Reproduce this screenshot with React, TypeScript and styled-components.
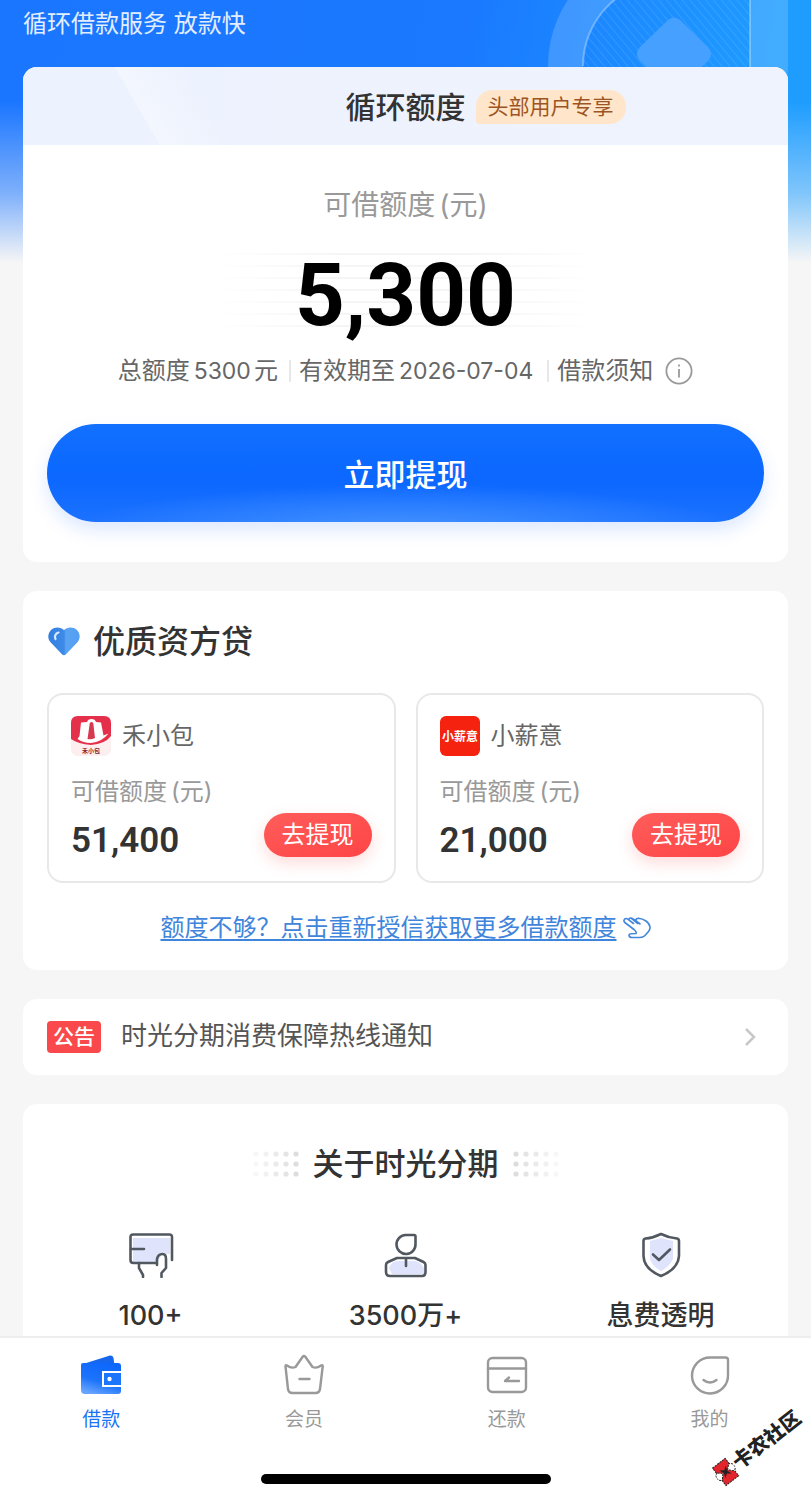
import React from 'react';
import styled, { createGlobalStyle, css } from 'styled-components';

const GlobalStyle = createGlobalStyle`
  *, *::before, *::after { box-sizing: border-box; }
  body {
    margin: 0;
    background: #f6f6f6;
    color: #333;
    font-family: Inter, "Noto Sans CJK SC", sans-serif;
  }
  button { font: inherit; border: 0; padding: 0; cursor: pointer; }
  a { text-decoration: none; color: inherit; }
  h1, h2, p, ul, dl { margin: 0; padding: 0; }
  svg { display: block; flex: none; }
`;

const Screen = styled.div`
  height: 100vh;
  display: flex;
  flex-direction: column;
  overflow: hidden;
`;

const Scroller = styled.main`
  position: relative;
  flex: 1;
  min-height: 0;
  overflow: hidden;
`;

const Hero = styled.div`
  position: absolute;
  inset: 0 0 auto 0;
  height: 268px;
  overflow: hidden;
  background:
    linear-gradient(180deg, rgba(246, 246, 246, 0) 38%, rgba(246, 246, 246, 0.45) 72%, #f6f6f6 98%),
    linear-gradient(100deg, #1b76ff 0%, #1a79ff 55%, #1e9dff 92%);
`;

const HeroArt = styled.svg`
  position: absolute;
  top: 0;
  right: 0;
`;

const Content = styled.div`
  position: relative;
  display: flex;
  flex-direction: column;
  gap: 29px;
  padding: 0 23px;
`;

const Slogan = styled.p`
  height: 38px;
  padding-top: 6px;
  font-size: 24px;
  line-height: 36px;
  color: #e2eeff;
`;

const Card = styled.section`
  background: #fff;
  border-radius: 14px;
  overflow: hidden;
`;

const QuotaHead = styled.header`
  height: 78px;
  padding-top: 2px;
  display: grid;
  grid-template-columns: 1fr auto 1fr;
  align-items: center;
  gap: 10px;
  background:
    linear-gradient(60deg, transparent 118px, rgba(255, 255, 255, 0.35) 119px, rgba(255, 255, 255, 0) 180px),
    linear-gradient(90deg, #ecf2fe, #eff3fd);
`;

const QuotaTitle = styled.h1`
  grid-column: 2;
  font-size: 30px;
  line-height: 40px;
  font-weight: 500;
`;

const Badge = styled.span`
  justify-self: start;
  padding: 0 12px;
  font-size: 21px;
  line-height: 34px;
  color: #9c5522;
  background: #ffe6cb;
  border-radius: 16px 16px 16px 4px;
`;

const QuotaBody = styled.div`
  display: flex;
  flex-direction: column;
  align-items: center;
  padding: 40px 24px;
`;

const Label = styled.p<{ $large?: boolean }>`
  color: #999;
  font-size: ${p => (p.$large ? 28 : 24)}px;
  line-height: ${p => (p.$large ? 40 : 32)}px;
`;

const Unit = styled.span`
  margin-left: 4px;
`;

const Amount = styled.strong<{ $large?: boolean }>`
  font-family: Roboto, sans-serif;
  ${p =>
    p.$large
      ? css`
          width: 380px;
          margin: 28px 0 18px;
          text-align: center;
          font-size: 87px;
          line-height: 84px;
          font-weight: 700;
          color: #000;
          background:
            linear-gradient(90deg, #fff, transparent 35%, transparent 65%, #fff),
            repeating-linear-gradient(180deg, #f5f5f5 0 2px, #fff 2px 12px);
        `
      : css`
          font-size: 35px;
          line-height: 44px;
          font-weight: 600;
        `}
`;

const Facts = styled.ul`
  display: flex;
  align-items: center;
  list-style: none;
  font-size: 24px;
  line-height: 32px;
  color: #666;
`;

const Fact = styled.li`
  display: flex;
  align-items: center;
  white-space: nowrap;
  & + & {
    margin-left: 11px;
    padding-left: 10px;
    background: linear-gradient(#e8e8e8, #e8e8e8) left center / 2px 22px no-repeat;
  }
`;

const Figure = styled.span`
  margin: 0 3px 0 4px;
  font-size: 23px;
`;

const InfoButton = styled.button`
  margin-left: 12px;
  background: none;
`;

const PrimaryButton = styled.button`
  width: 100%;
  height: 98px;
  margin-top: 37px;
  padding-bottom: 2px;
  border-radius: 49px;
  font-size: 31px;
  font-weight: 500;
  color: #fff;
  background:
    radial-gradient(ellipse 46% 44% at 50% 106%, rgba(80, 155, 255, 0.75), rgba(80, 155, 255, 0) 100%),
    linear-gradient(180deg, #1270ff 0%, #0b67ff 55%, #1c72ff 100%);
  box-shadow: 0 8px 18px rgba(20, 100, 255, 0.15);
`;

const PartnerCard = styled(Card)`
  display: flex;
  flex-direction: column;
  padding: 29px 24px 24px;
`;

const SectionTitle = styled.h2`
  display: flex;
  align-items: center;
  gap: 12px;
  font-size: 32px;
  line-height: 44px;
  font-weight: 500;
`;

const Partners = styled.div`
  display: grid;
  grid-template-columns: 1fr 1fr;
  gap: 20px;
  margin-top: 29px;
`;

const Partner = styled.article`
  display: flex;
  flex-direction: column;
  padding: 21px 22px 18px;
  border: 2px solid #e8e8e8;
  border-radius: 16px;
`;

const PartnerName = styled.div`
  display: flex;
  align-items: center;
  gap: 11px;
  margin-bottom: 20px;
  font-size: 24px;
  line-height: 40px;
  color: #666;
`;

const PartnerRow = styled.div`
  display: flex;
  align-items: flex-end;
  justify-content: space-between;
  margin-top: 5px;
`;

const RedButton = styled.button`
  width: 108px;
  height: 44px;
  margin-bottom: 6px;
  border-radius: 22px;
  font-size: 24px;
  line-height: 44px;
  color: #fff;
  background: linear-gradient(160deg, #ff5d5a, #fe4446);
  box-shadow: 0 6px 16px rgba(255, 75, 75, 0.2);
`;

const MoreLink = styled.a`
  align-self: center;
  display: flex;
  align-items: center;
  gap: 6px;
  margin-top: 27px;
  font-size: 24px;
  line-height: 36px;
  color: #3f85dc;
  span {
    text-decoration: underline;
    text-decoration-thickness: 2px;
    text-underline-offset: 3px;
  }
`;

const Notice = styled.a`
  display: flex;
  align-items: center;
  gap: 20px;
  height: 76px;
  padding: 0 32px 0 24px;
  background: #fff;
  border-radius: 14px;
  font-size: 26px;
  line-height: 36px;
  color: #555;
  svg { margin-left: auto; }
`;

const NoticeText = styled.span`
  padding-bottom: 2px;
`;

const NoticeTag = styled.span`
  padding: 0 6px;
  border-radius: 4px;
  font-size: 21px;
  line-height: 32px;
  font-weight: 500;
  color: #fff;
  background: #f9494c;
`;

const AboutTitle = styled(SectionTitle)`
  justify-content: center;
  gap: 14px;
  padding-top: 38px;
  font-size: 31px;
`;

const Features = styled.ul`
  display: grid;
  grid-template-columns: repeat(3, 1fr);
  margin-top: 46px;
  list-style: none;
`;

const Feature = styled.li`
  display: flex;
  flex-direction: column;
  align-items: center;
  gap: 18px;
  height: 140px;
  font-size: 27px;
  line-height: 40px;
  font-weight: 500;
`;

const BottomBar = styled.footer`
  position: relative;
  display: flex;
  flex-direction: column;
  align-items: center;
  justify-content: space-between;
  height: 164px;
  padding-bottom: 16px;
  border-top: 2px solid #eee;
  background: #fff;
`;

const Tabs = styled.nav`
  display: grid;
  grid-template-columns: repeat(4, 1fr);
  width: 100%;
  padding-top: 16px;
`;

const Tab = styled.a<{ $active?: boolean }>`
  display: flex;
  flex-direction: column;
  align-items: center;
  gap: 10px;
  font-size: 19px;
  line-height: 28px;
  color: ${p => (p.$active ? '#1a73f5' : '#999')};
`;

const HomeIndicator = styled.div`
  width: 290px;
  height: 10px;
  border-radius: 5px;
  background: #000;
`;

const Watermark = styled.div`
  position: absolute;
  right: 2px;
  bottom: 39px;
  display: flex;
  align-items: center;
  gap: 1px;
  font-size: 20px;
  line-height: 28px;
  font-weight: 900;
  color: #222;
  transform: rotate(-38deg);
`;

const InfoIcon = () => (
  <svg width="28" height="28" viewBox="0 0 28 28" fill="none" stroke="#999" strokeWidth="1.8">
    <circle cx="14" cy="14" r="12.6" />
    <path d="M14 12v8.5M14 7.5v2" />
  </svg>
);

const HeartIcon = () => (
  <svg width="34" height="32" viewBox="0 0 34 32">
    <defs>
      <linearGradient id="heart" x1="0" x2="1" y1="0" y2="0">
        <stop offset="0" stopColor="#347fe0" />
        <stop offset="0.5" stopColor="#3d8ae8" />
        <stop offset="0.56" stopColor="#5aa3f3" />
        <stop offset="1" stopColor="#539ff2" />
      </linearGradient>
    </defs>
    <path fill="url(#heart)" d="M17 4.200C14 .800 8 .300 4.300 3.700C.500 7.300.300 12.700 3.800 16.500L15.200 28.500Q17 30 18.800 28.500L30.200 16.500C33.700 12.700 33.500 7.300 29.700 3.700C26 .300 20 .800 17 4.200Z" />
    <path d="M11.500 6.500A4.500 4.500 0 0 0 8.500 13" fill="none" stroke="#d7eaff" strokeWidth="2.200" strokeLinecap="round" />
  </svg>
);

const LogoText = styled.text`
  font-family: "Noto Sans CJK SC", sans-serif;
  font-weight: 700;
  text-anchor: middle;
`;

const BagLogo = () => (
  <svg width="40" height="40" viewBox="0 0 40 40">
    <rect width="40" height="40" rx="7" fill="#fdeef0" />
    <path d="M0 7Q0 0 7 0H33Q40 0 40 7V20Q34 28 20 29Q7 28 0 23Z" fill="#e5304c" />
    <path d="M10 6.500L16 6Q17 3 20.500 3Q24 3 25 6L30 6.500L32.500 19.500L37.500 17.500Q31 26 20 27Q12 27 6.500 23L8.500 20Z" fill="#fff" />
    <path d="M18.500 9Q18.500 6 20.500 6Q22.500 6 22.500 9L24 22Q20 24 16.500 23Z" fill="#d63a50" />
    <LogoText x="20" y="37" fontSize="6" fill="#8c1c2e">禾小包</LogoText>
  </svg>
);

const SalaryLogo = () => (
  <svg width="40" height="40" viewBox="0 0 40 40">
    <rect width="40" height="40" rx="6" fill="#f5220f" />
    <LogoText x="20" y="25" fontSize="12" fill="#fff">小薪意</LogoText>
  </svg>
);

const HandIcon = () => (
  <svg width="28" height="22" viewBox="0 0 28 22" fill="none" stroke="#4387dc" strokeWidth="1.600" strokeLinecap="round" strokeLinejoin="round">
    <path d="M11 12.500L1.800 5.500Q.200 3.800 1.600 2.200Q3 .900 4.800 2.200L10.500 6.500M5.500 2.700Q6.500 .600 8.700 1.300L12.500 3.500Q13 1.200 15.500 1.200Q19.500 1.500 23 4Q26.500 6.500 27 10Q27.200 12.500 25.500 14.500L22 18.500Q20 20.500 17 20.500H9Q6.500 20.500 6 18.500Q6 16.800 8 16.800L13 16.500Q14 15 11 12.500" />
    <path d="M8.500 1.500L14.500 6.500M12.500 3.500L17 7" />
  </svg>
);

const Chevron = () => (
  <svg width="12" height="20" viewBox="0 0 12 20" fill="none" stroke="#c8c8c8" strokeWidth="2.500">
    <path d="M2 2L10 10L2 18" />
  </svg>
);

const Dots = ({ fadeLeft = false }: { fadeLeft?: boolean }) => (
  <svg width="46" height="26" viewBox="0 0 46 26" fill="#b5b5b5">
    {[0, 1, 2, 3, 4].map(c =>
      [0, 1, 2].map(r => (
        <circle key={`${c}-${r}`} cx={3 + c * 10} cy={3 + r * 10} r="2.600" opacity={0.1 + 0.09 * (fadeLeft ? c : 4 - c)} />
      )),
    )}
  </svg>
);

const line = { fill: 'none', stroke: '#515860', strokeWidth: 2.6, strokeLinecap: 'round', strokeLinejoin: 'round' } as const;

const CardHandIcon = () => (
  <svg width="46" height="46" viewBox="0 0 46 46">
    <path d="M5 6H42V22H34L29 31H5Z" fill="#dfe3fc" />
    <g {...line}>
      <path d="M44 28V5Q44 2.500 41.500 2.500H5Q2.500 2.500 2.500 5V28Q2.500 31 5.500 31H28" />
      <path d="M3 17H16M11 31V36L15 43V45M29 33V27Q30 22 34.500 22Q38 22 38 27V36L33.500 41V45" />
    </g>
  </svg>
);

const PersonIcon = () => (
  <svg width="46" height="46" viewBox="0 0 46 46">
    <path d="M6 36Q8 29 16 29H31Q38 30 41 36V42H9Z" fill="#dfe3fc" />
    <g {...line}>
      <path d="M22.500 3H31Q32.500 3 32.500 4.500V12A9.500 9.500 0 1 1 22.500 3Z" />
      <path d="M14 26H32L40.500 30Q42.500 31 42.500 33V40Q42.500 44 39 44H7Q3 44 3 40V33Q3 31 5 30ZM23 27V34" />
    </g>
  </svg>
);

const ShieldIcon = () => (
  <svg width="46" height="46" viewBox="0 0 46 46">
    <path d="M12 9L23 6L35 9V27Q31 35 23 39Q14 34 12 27Z" fill="#dfe3fc" />
    <g {...line}>
      <path d="M23 2Q31 6 39 6.500Q41 7 41 9V24Q40 37 23 44Q6 37 5.500 24V9Q5.500 7 7.500 6.500Q15 6 23 2Z" />
      <path d="M15 22.500L21 28L32 17.500" />
    </g>
  </svg>
);

const WalletIcon = () => (
  <svg width="42" height="42" viewBox="0 0 42 42">
    <defs>
      <linearGradient id="wallet" x1="0.7" y1="0" x2="0.3" y2="1">
        <stop offset="0" stopColor="#0c67fb" />
        <stop offset="0.6" stopColor="#1c73fb" />
        <stop offset="1" stopColor="#67a4ff" />
      </linearGradient>
    </defs>
    <path d="M3 10L30 1.500Q33 1 33.500 4L34.500 12H3Z" fill="#1766ee" />
    <path d="M1 11Q1 9 3 9H38Q41 9 41 12V17H22V33H41V37Q41 40 38 40H5Q1 40 1 36Z" fill="url(#wallet)" />
    <path d="M24 19H41V31H24Z" fill="#1c75fb" />
    <circle cx="29.500" cy="25" r="2.200" fill="#fff" />
  </svg>
);

const tabLine = { fill: 'none', stroke: '#999', strokeWidth: 2.4, strokeLinecap: 'round', strokeLinejoin: 'round' } as const;

const CrownIcon = () => (
  <svg width="42" height="42" viewBox="0 0 42 42" {...tabLine}>
    <path d="M2.500 12.500Q2.300 10.500 4 11.500Q8.500 14.800 12.500 13L19.500 3Q21 1 22.500 3L29.500 13Q33.500 14.800 38 11.500Q40 10.500 39.700 12.500L37 35Q36.500 39 32.500 39H9.500Q5.500 39 5 35Z" />
    <path d="M16.500 25H26.500" />
  </svg>
);

const RepayIcon = () => (
  <svg width="42" height="42" viewBox="0 0 42 42" {...tabLine}>
    <rect x="2" y="4" width="38" height="34" rx="4.500" />
    <path d="M2 14.500H40M33 27H19L23 23.500" />
  </svg>
);

const FaceIcon = () => (
  <svg width="42" height="42" viewBox="0 0 42 42" {...tabLine}>
    <path d="M21 3.500H36.500Q39 3.500 39 6V21A18 18 0 1 1 21 3.500Z" />
    <path d="M14.500 26Q21 31 27.500 26" />
  </svg>
);

const WatermarkIcon = () => (
  <svg width="22" height="26" viewBox="0 0 22 26">
    <g stroke="#222" strokeWidth="1" strokeDasharray="2 1">
      <circle cx="4.500" cy="13" r="4.500" fill="#fff" />
      <circle cx="17.500" cy="13" r="4.500" fill="#fff" />
      <path d="M3 2H19V8L14 12.500L19 18V24H3V18L8 12.500L3 8Z" fill="#e2262b" />
    </g>
    <path d="M7 8L11 11L15 8L13 13L15 18L11 15L7 18L9 13Z" fill="#222" />
  </svg>
);

const partners = [
  { name: '禾小包', amount: '51,400', logo: <BagLogo /> },
  { name: '小薪意', amount: '21,000', logo: <SalaryLogo /> },
];

const features = [
  { text: '100+', icon: <CardHandIcon /> },
  { text: '3500万+', icon: <PersonIcon /> },
  { text: '息费透明', icon: <ShieldIcon /> },
];

const tabs = [
  { text: '借款', icon: <WalletIcon />, active: true },
  { text: '会员', icon: <CrownIcon /> },
  { text: '还款', icon: <RepayIcon /> },
  { text: '我的', icon: <FaceIcon /> },
];

export default function App() {
  return (
    <Screen>
      <GlobalStyle />
      <Scroller>
        <Hero>
          <HeroArt width="263" height="190" viewBox="548 0 263 190">
            <defs>
              <pattern id="hatch" width="6" height="6" patternUnits="userSpaceOnUse" patternTransform="rotate(-40)">
                <path d="M0 0V6" stroke="#fff" strokeOpacity="0.1" strokeWidth="2" />
              </pattern>
            </defs>
            <path fill="#fff" fillOpacity="0.16" fillRule="evenodd" d="M788 -54V66A120 120 0 0 1 548 66A120 120 0 0 1 668 -54ZM750 -19H668A85 85 0 0 0 583 66A85 85 0 0 0 750 86Z" />
            <path fill="url(#hatch)" d="M750 -19H668A85 85 0 0 0 583 66A85 85 0 0 0 750 86Z" />
            <path fill="none" stroke="#fff" strokeOpacity="0.3" strokeWidth="2" d="M750 86V-19H668A85 85 0 0 0 583 66" />
            <path fill="#45a0ff" d="M668 20Q674 15 680 20L708 47Q714 54 708 61L680 88H668L640 61Q634 54 640 47Z" />
          </HeroArt>
        </Hero>
        <Content>
          <Slogan>循环借款服务 放款快</Slogan>
          <Card>
            <QuotaHead>
              <QuotaTitle>循环额度</QuotaTitle>
              <Badge>头部用户专享</Badge>
            </QuotaHead>
            <QuotaBody>
              <Label $large>可借额度<Unit>(元)</Unit></Label>
              <Amount $large>5,300</Amount>
              <Facts>
                <Fact>总额度<Figure>5300</Figure>元</Fact>
                <Fact>有效期至<Figure>2026-07-04</Figure></Fact>
                <Fact>
                  借款须知
                  <InfoButton type="button" aria-label="借款须知"><InfoIcon /></InfoButton>
                </Fact>
              </Facts>
              <PrimaryButton type="button">立即提现</PrimaryButton>
            </QuotaBody>
          </Card>

          <PartnerCard>
            <SectionTitle><HeartIcon />优质资方贷</SectionTitle>
            <Partners>
              {partners.map(p => (
                <Partner key={p.name}>
                  <PartnerName>{p.logo}{p.name}</PartnerName>
                  <Label>可借额度<Unit>(元)</Unit></Label>
                  <PartnerRow>
                    <Amount>{p.amount}</Amount>
                    <RedButton type="button">去提现</RedButton>
                  </PartnerRow>
                </Partner>
              ))}
            </Partners>
            <MoreLink href="#more">
              <span>额度不够？点击重新授信获取更多借款额度</span>
              <HandIcon />
            </MoreLink>
          </PartnerCard>

          <Notice href="#notice">
            <NoticeTag>公告</NoticeTag>
            <NoticeText>时光分期消费保障热线通知</NoticeText>
            <Chevron />
          </Notice>

          <Card>
            <AboutTitle><Dots fadeLeft />关于时光分期<Dots /></AboutTitle>
            <Features>
              {features.map(f => (
                <Feature key={f.text}>{f.icon}{f.text}</Feature>
              ))}
            </Features>
          </Card>
        </Content>
      </Scroller>

      <BottomBar>
        <Tabs>
          {tabs.map(t => (
            <Tab key={t.text} href="#tab" $active={t.active}>{t.icon}{t.text}</Tab>
          ))}
        </Tabs>
        <HomeIndicator />
        <Watermark><WatermarkIcon />卡农社区</Watermark>
      </BottomBar>
    </Screen>
  );
}
